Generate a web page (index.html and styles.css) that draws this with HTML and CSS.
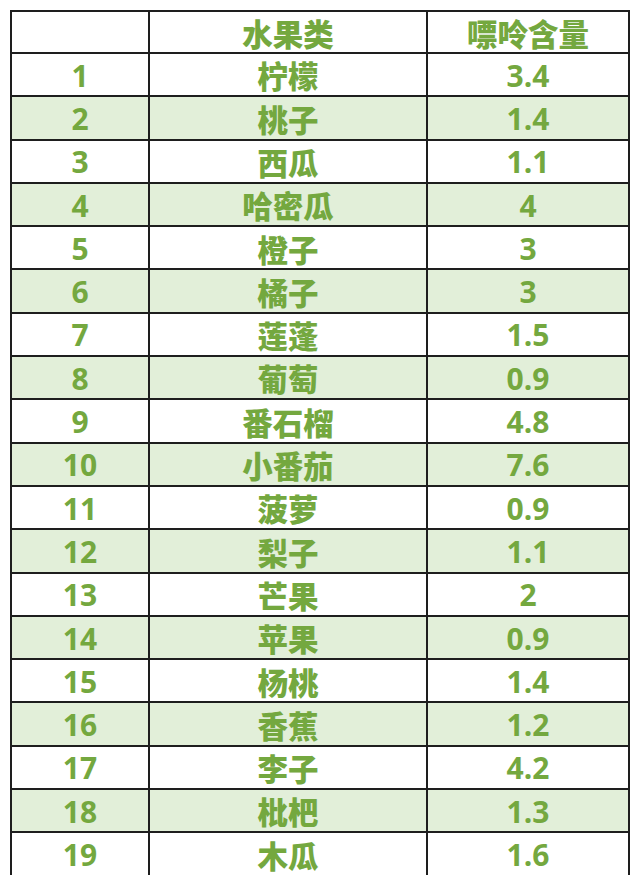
FILE: index.html
```html
<!DOCTYPE html>
<html lang="zh-CN">
<head>
<meta charset="utf-8">
<title>水果嘌呤含量</title>
<link rel="stylesheet" href="styles.css">
</head>
<body>
<div class="page">
  <div class="table">
    <div class="cell head"></div><div class="cell zh">水果类</div><div class="cell zh">嘌呤含量</div>
    <div class="cell">1</div><div class="cell zh">柠檬</div><div class="cell">3.4</div>
    <div class="cell alt">2</div><div class="cell alt zh">桃子</div><div class="cell alt">1.4</div>
    <div class="cell">3</div><div class="cell zh">西瓜</div><div class="cell">1.1</div>
    <div class="cell alt">4</div><div class="cell alt zh">哈密瓜</div><div class="cell alt">4</div>
    <div class="cell">5</div><div class="cell zh">橙子</div><div class="cell">3</div>
    <div class="cell alt">6</div><div class="cell alt zh">橘子</div><div class="cell alt">3</div>
    <div class="cell">7</div><div class="cell zh">莲蓬</div><div class="cell">1.5</div>
    <div class="cell alt">8</div><div class="cell alt zh">葡萄</div><div class="cell alt">0.9</div>
    <div class="cell">9</div><div class="cell zh">番石榴</div><div class="cell">4.8</div>
    <div class="cell alt">10</div><div class="cell alt zh">小番茄</div><div class="cell alt">7.6</div>
    <div class="cell">11</div><div class="cell zh">菠萝</div><div class="cell">0.9</div>
    <div class="cell alt">12</div><div class="cell alt zh">梨子</div><div class="cell alt">1.1</div>
    <div class="cell">13</div><div class="cell zh">芒果</div><div class="cell">2</div>
    <div class="cell alt">14</div><div class="cell alt zh">苹果</div><div class="cell alt">0.9</div>
    <div class="cell">15</div><div class="cell zh">杨桃</div><div class="cell">1.4</div>
    <div class="cell alt">16</div><div class="cell alt zh">香蕉</div><div class="cell alt">1.2</div>
    <div class="cell">17</div><div class="cell zh">李子</div><div class="cell">4.2</div>
    <div class="cell alt">18</div><div class="cell alt zh">枇杷</div><div class="cell alt">1.3</div>
    <div class="cell">19</div><div class="cell zh">木瓜</div><div class="cell">1.6</div>
  </div>
</div>
</body>
</html>
```
FILE: styles.css
```css
html, body {
  margin: 0;
  padding: 0;
  background: #ffffff;
  overflow: hidden;
}

.page {
  padding: 10px 0 0 10px;
}

.table {
  display: grid;
  width: 616px;
  grid-template-columns: 136px 276px 200px;
  grid-template-rows: 40px repeat(19, 41.3px);
  gap: 2px;
  padding: 2px;
  background: #1e1e1e;
  font-family: "Open Sans", "Noto Sans CJK SC", sans-serif;
  font-weight: 700;
  font-size: 30px;
  color: #74a83f;
}

.cell {
  background: #ffffff;
  display: flex;
  align-items: center;
  justify-content: center;
  line-height: 1;
  padding-top: 2px;
  box-sizing: border-box;
}

.cell.zh {
  font-family: "Noto Sans CJK SC", sans-serif;
  font-weight: 900;
  font-size: 30.5px;
}

.cell.alt {
  background: #e2efd9;
}
```
